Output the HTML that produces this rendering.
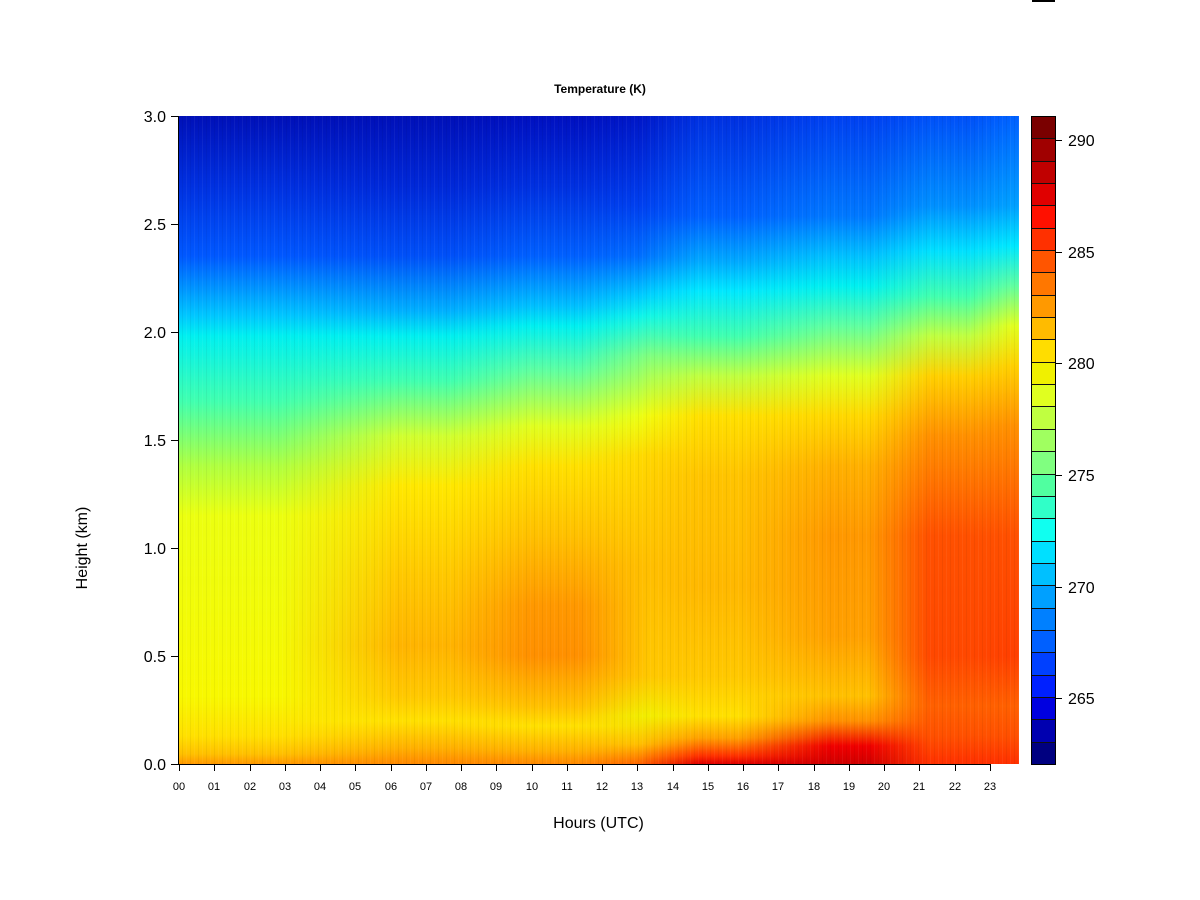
<!DOCTYPE html>
<html><head><meta charset="utf-8"><style>
body{margin:0;width:1200px;height:900px;background:#fff;position:relative;overflow:hidden;font-family:"Liberation Sans",Arial,sans-serif;color:#000}
.a{position:absolute}
#plot{left:179px;top:116px;width:840px;height:648px;overflow:hidden}
.col{position:absolute;top:0;height:648px;right:0}
.tick{position:absolute;background:#000}
.yl{position:absolute;font-size:16px;width:50px;text-align:right;left:116px}
.xl{position:absolute;font-size:11px;top:781px;width:30px;text-align:center}
.cl{position:absolute;font-size:16px;left:1068px}
#cb{left:1031px;top:116px;width:23px;height:647px;border:1px solid #000;display:flex;flex-direction:column}
#cb div{flex:1;border-bottom:1px solid #111}
#cb div:last-child{border-bottom:none}
</style></head><body>
<div class="a" style="left:1032px;top:0;width:23px;height:2px;background:#000"></div>
<div class="a" style="left:0;width:1200px;top:82px;text-align:center;font-size:12px;font-weight:bold">Temperature (K)</div>
<div class="a" id="plot">
<div class="col" style="left:0;background:linear-gradient(#0010b8 0px,#0030e0 70px,#0058ff 140px,#00c8ff 200px,#00f0f0 220px,#40ffb0 285px,#b0ff40 350px,#ecff10 400px,#f8f800 580px,#ffe000 620px,#ffc000 638px,#ff9800 648px)"></div>
<div class="col" style="left:100px;-webkit-mask-image:linear-gradient(to right,transparent,#000 120px);background:linear-gradient(#0010b8 0px,#0028d8 70px,#0050f8 140px,#00b0ff 195px,#00f0f0 220px,#40ffb0 265px,#d0ff30 320px,#ffe800 370px,#ffc800 460px,#ffb400 530px,#ffc800 580px,#ffe000 605px,#ffb000 632px,#ff8800 648px)"></div>
<div class="col" style="left:270px;-webkit-mask-image:linear-gradient(to right,transparent,#000 80px);background:linear-gradient(#0010c0 0px,#0030e0 70px,#0060ff 140px,#00c0ff 190px,#00f0f0 210px,#60ffa0 255px,#e0ff20 310px,#ffe000 350px,#ffc000 420px,#ff9800 490px,#ff9000 540px,#ffc000 590px,#ffe000 610px,#ffb000 635px,#ff8800 648px)"></div>
<div class="col" style="left:400px;-webkit-mask-image:linear-gradient(to right,transparent,#000 70px);background:linear-gradient(#0018c8 0px,#0040f0 90px,#0070ff 140px,#00d0ff 180px,#10f8e8 200px,#80ff80 240px,#f0ff10 300px,#ffd800 340px,#ffc000 450px,#ffc800 560px,#f0f000 600px,#ffc000 628px,#ff6000 648px)"></div>
<div class="col" style="left:460px;-webkit-mask-image:linear-gradient(to right,transparent,#000 60px);background:linear-gradient(#0030e0 0px,#0060ff 100px,#00a8ff 145px,#00e8ff 175px,#40ffb0 220px,#c0ff40 260px,#ffe000 300px,#ffc400 360px,#ffb800 470px,#ffc800 560px,#ffe000 600px,#ffa000 622px,#ff3000 640px,#e00000 648px)"></div>
<div class="col" style="left:560px;-webkit-mask-image:linear-gradient(to right,transparent,#000 90px);background:linear-gradient(#0040f0 0px,#0078ff 100px,#00c0ff 140px,#00f0f0 170px,#60ffa0 210px,#e0ff20 260px,#ffd800 300px,#ffb000 350px,#ff9800 420px,#ffa000 520px,#ffc000 580px,#ff9000 605px,#f00000 630px,#d00000 648px)"></div>
<div class="col" style="left:690px;-webkit-mask-image:linear-gradient(to right,transparent,#000 60px);background:linear-gradient(#0050f8 0px,#0090ff 90px,#00e0ff 135px,#40ffb0 180px,#c0ff40 220px,#ffd000 260px,#ff9000 320px,#ff5000 420px,#ff4800 540px,#ff6000 590px,#ff5000 620px,#ff3000 648px)"></div>
<div class="col" style="left:790px;-webkit-mask-image:linear-gradient(to right,transparent,#000 40px);background:linear-gradient(#0060ff 0px,#00a0ff 90px,#00e8ff 130px,#60ffa0 170px,#e0ff20 210px,#ffd000 250px,#ff9000 310px,#ff5000 420px,#ff4000 540px,#ff6000 590px,#ff5000 620px,#ff3000 648px)"></div>
<div class="col" style="left:0;opacity:.05;background:repeating-linear-gradient(90deg,transparent 0 3px,#000 3px 4px,transparent 4px 7px,#fff 7px 8px)"></div>
</div>
<div class="tick" style="left:178px;top:116px;width:1px;height:649px"></div>
<div class="tick" style="left:178px;top:764px;width:812px;height:1px"></div>
<div class="tick" style="left:171px;top:116px;width:7px;height:1px"></div>
<div class="tick" style="left:171px;top:224px;width:7px;height:1px"></div>
<div class="tick" style="left:171px;top:332px;width:7px;height:1px"></div>
<div class="tick" style="left:171px;top:440px;width:7px;height:1px"></div>
<div class="tick" style="left:171px;top:548px;width:7px;height:1px"></div>
<div class="tick" style="left:171px;top:656px;width:7px;height:1px"></div>
<div class="tick" style="left:171px;top:764px;width:7px;height:1px"></div>
<div class="yl" style="top:109px">3.0</div>
<div class="yl" style="top:217px">2.5</div>
<div class="yl" style="top:325px">2.0</div>
<div class="yl" style="top:433px">1.5</div>
<div class="yl" style="top:541px">1.0</div>
<div class="yl" style="top:649px">0.5</div>
<div class="yl" style="top:757px">0.0</div>
<div id="xt"></div>
<script>
var h='';for(var i=0;i<24;i++){var x=Math.round(179+i*35.26);h+='<div class="tick" style="left:'+x+'px;top:764px;width:1px;height:7px"></div><div class="xl" style="left:'+(x-15)+'px">'+(i<10?'0':'')+i+'</div>';}
document.getElementById('xt').innerHTML=h;
</script>
<div class="a" style="left:0;width:1197px;top:815px;text-align:center;font-size:16px">Hours (UTC)</div>
<div class="a" style="left:83px;top:548px;font-size:16px;transform:translate(-50%,-50%) rotate(-90deg);white-space:nowrap">Height (km)</div>
<div class="a" id="cb">
<div style="background:#7a0000"></div><div style="background:#a00000"></div><div style="background:#c00000"></div><div style="background:#e00000"></div><div style="background:#ff1000"></div><div style="background:#ff3000"></div><div style="background:#ff5500"></div><div style="background:#ff7700"></div><div style="background:#ff9900"></div><div style="background:#ffbb00"></div><div style="background:#ffdd00"></div><div style="background:#f0f000"></div><div style="background:#e0ff20"></div><div style="background:#c0ff40"></div><div style="background:#a0ff60"></div><div style="background:#80ff80"></div><div style="background:#50ffa0"></div><div style="background:#30ffc8"></div><div style="background:#10fff0"></div><div style="background:#00e0ff"></div><div style="background:#00c0ff"></div><div style="background:#00a0ff"></div><div style="background:#0080ff"></div><div style="background:#0060ff"></div><div style="background:#0040ff"></div><div style="background:#0020ff"></div><div style="background:#0000e0"></div><div style="background:#0000b0"></div><div style="background:#000080"></div>
</div>
<div class="tick" style="left:1055px;top:140px;width:7px;height:1px"></div>
<div class="tick" style="left:1055px;top:252px;width:7px;height:1px"></div>
<div class="tick" style="left:1055px;top:363px;width:7px;height:1px"></div>
<div class="tick" style="left:1055px;top:475px;width:7px;height:1px"></div>
<div class="tick" style="left:1055px;top:587px;width:7px;height:1px"></div>
<div class="tick" style="left:1055px;top:698px;width:7px;height:1px"></div>
<div class="cl" style="top:133px">290</div>
<div class="cl" style="top:245px">285</div>
<div class="cl" style="top:356px">280</div>
<div class="cl" style="top:468px">275</div>
<div class="cl" style="top:580px">270</div>
<div class="cl" style="top:691px">265</div>
</body></html>
